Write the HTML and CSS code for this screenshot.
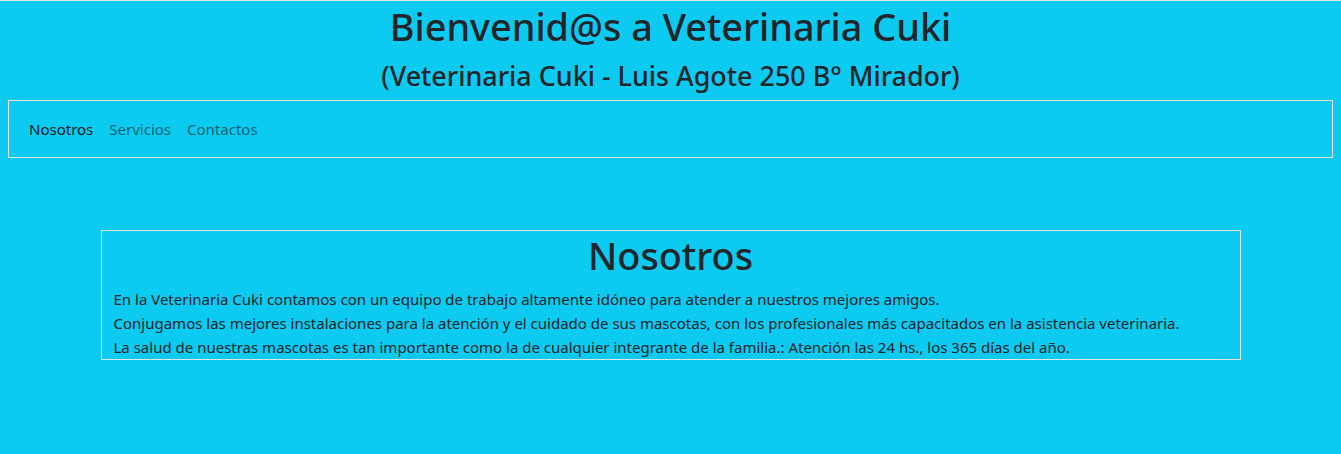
FILE: index.html
```html
<!DOCTYPE html>
<html lang="es">
<head>
<meta charset="utf-8">
<title>Veterinaria Cuki</title>
<link rel="stylesheet" href="styles.css">
</head>
<body>
<header class="header">
  <h1 class="title">Bienvenid@s a Veterinaria Cuki</h1>
  <h3 class="subtitle">(Veterinaria Cuki - Luis Agote 250 B° Mirador)</h3>
</header>
<nav class="navbar">
  <ul class="nav-list">
    <li><a class="nav-link active" href="#">Nosotros</a></li>
    <li><a class="nav-link" href="#">Servicios</a></li>
    <li><a class="nav-link" href="#">Contactos</a></li>
  </ul>
</nav>
<section class="about">
  <h1 class="about-title">Nosotros</h1>
  <p class="about-text">En la Veterinaria Cuki contamos con un equipo de trabajo altamente idóneo para atender a nuestros mejores amigos.<br>Conjugamos las mejores instalaciones para la atención y el cuidado de sus mascotas, con los profesionales más capacitados en la asistencia veterinaria.<br>La salud de nuestras mascotas es tan importante como la de cualquier integrante de la familia.: Atención las 24 hs., los 365 días del año.</p>
</section>
</body>
</html>
```

FILE: styles.css
```css
html, body {
  margin: 0;
  padding: 0;
}
body {
  background: #0dcaf0;
  color: #212529;
  font-family: "Noto Sans", "Open Sans", sans-serif;
  font-size: 15px;
  line-height: 24px;
  border-top: 1px solid #e4e4e4;
  min-height: 453px;
}
.header {
  text-align: center;
  padding-top: 2px;
}
.title {
  margin: 0 0 8px;
  font-size: 37.8px;
  line-height: 48px;
  font-weight: 500;
}
.subtitle {
  margin: 0;
  font-size: 26.9px;
  line-height: 33.6px;
  font-weight: 500;
}
.navbar {
  margin: 7.4px 8px 0;
  border: 1px solid #e4e4e4;
  padding: 8px 12px;
}
.nav-list {
  list-style: none;
  margin: 0;
  padding: 0;
  display: flex;
}
.nav-link {
  display: block;
  padding: 8px;
  color: rgba(0, 0, 0, 0.55);
  text-decoration: none;
}
.nav-link.active {
  color: rgba(0, 0, 0, 0.9);
}
.about {
  width: 1140px;
  box-sizing: border-box;
  margin: 72px auto 0;
  border: 1px solid #e4e4e4;
  padding: 1px 12px 0;
}
.about-title {
  margin: 0 0 7px;
  text-align: center;
  font-size: 37.8px;
  line-height: 48px;
  font-weight: 500;
}
.about-text {
  margin: 0;
}
```
